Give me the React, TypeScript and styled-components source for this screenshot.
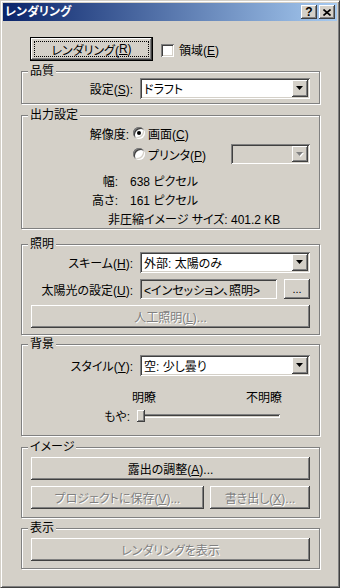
import React from 'react';
import styled, { createGlobalStyle, css } from 'styled-components';

const GlobalStyle = createGlobalStyle`
  html, body {
    margin: 0;
    padding: 0;
    background: #d4d0c8;
  }
  body {
    font-family: "Liberation Sans", "Noto Sans CJK JP", sans-serif;
    font-size: 12px;
    font-feature-settings: "palt" 1;
    color: #000;
  }
  * {
    box-sizing: border-box;
  }
`;

const raised = css`
  box-shadow: inset -1px -1px #404040, inset 1px 1px #fff, inset -2px -2px #808080;
`;

const sunken = css`
  box-shadow: inset 1px 1px #808080, inset -1px -1px #fff, inset 2px 2px #404040,
    inset -2px -2px #d4d0c8;
`;

const Window = styled.div`
  width: 340px;
  height: 588px;
  background: #d4d0c8;
  border: 1px solid;
  border-color: #d4d0c8 #404040 #404040 #d4d0c8;
  box-shadow: inset 1px 1px #fff, inset -1px -1px #808080;
  padding: 2px;
  display: flex;
  flex-direction: column;
`;

const TitleBar = styled.div`
  height: 18px;
  display: flex;
  align-items: center;
  padding: 0 2px 0 2px;
  background: linear-gradient(to right, #0a246a, #a6caf0);
`;

const TitleText = styled.span`
  flex: 1;
  color: #fff;
  font-weight: bold;
  font-size: 12px;
  line-height: 18px;
`;

const TitleButton = styled.span`
  width: 16px;
  height: 14px;
  margin-left: 2px;
  background: #d4d0c8;
  ${raised};
  display: flex;
  align-items: center;
  justify-content: center;
  font-weight: bold;
  font-size: 12px;
  line-height: 14px;
`;

const Body = styled.div`
  flex: 1;
  padding: 16px 17px 0 18px;
  display: flex;
  flex-direction: column;
`;

const TopRow = styled.div`
  height: 24px;
  padding-left: 9px;
  display: flex;
  align-items: center;
`;

const DefaultButton = styled.button`
  width: 123px;
  height: 24px;
  padding: 3px;
  border: 1px solid #000;
  background: #d4d0c8;
  ${raised};
  font: inherit;
  color: #000;
  display: flex;
`;

const FocusRing = styled.span`
  flex: 1;
  border: 1px dotted #000;
  display: flex;
  align-items: center;
  justify-content: center;
`;

const CheckBox = styled.span`
  width: 13px;
  height: 13px;
  margin: 2px 5px 0 8px;
  background: #fff;
  ${sunken};
`;

const U = styled.span`
  text-decoration: underline;
`;

const Group = styled.div<{ $h: number; $mt: number }>`
  height: ${(p) => p.$h}px;
  margin-top: ${(p) => p.$mt}px;
  border: 1px solid #808080;
  box-shadow: inset 1px 1px #fff, 1px 1px #fff;
  padding: 0 9px;
  display: flex;
  flex-direction: column;
`;

const Legend = styled.div`
  align-self: flex-start;
  height: 14px;
  line-height: 14px;
  margin: -8px 0 0 -3px;
  padding: 0 2px;
  background: #d4d0c8;
`;

const FieldRow = styled.div<{ $mt: number }>`
  margin-top: ${(p) => p.$mt}px;
  display: grid;
  grid-template-columns: 1fr 170px;
  column-gap: 7px;
  align-items: center;
`;

const FieldLabel = styled.span`
  justify-self: end;
  white-space: nowrap;
`;

const Combo = styled.div<{ $disabled?: boolean; $w?: number; $h?: number }>`
  width: ${(p) => (p.$w ? `${p.$w}px` : 'auto')};
  height: ${(p) => p.$h ?? 21}px;
  padding: 2px;
  display: flex;
  background: ${(p) => (p.$disabled ? '#d4d0c8' : '#fff')};
  ${sunken};
`;

const ComboText = styled.span`
  flex: 1;
  padding-left: 2px;
  display: flex;
  align-items: center;
  white-space: nowrap;
  overflow: hidden;
`;

const ArrowButton = styled.span`
  width: 16px;
  background: #d4d0c8;
  ${raised};
  display: flex;
  align-items: center;
  justify-content: center;
`;

const Split = styled.div`
  display: flex;
  gap: 7px;
`;

const SmallButton = styled.span`
  width: 26px;
  height: 20px;
  background: #d4d0c8;
  ${raised};
  display: flex;
  align-items: center;
  justify-content: center;
  font-size: 11px;
  line-height: 14px;
`;

const ResRow = styled.div<{ $mt: number }>`
  height: 20px;
  margin-top: ${(p) => p.$mt}px;
  display: flex;
  align-items: center;
`;

const ResLabel = styled.span`
  width: 98px;
  margin-right: 4px;
  text-align: right;
  white-space: nowrap;
`;

const RadioOption = styled.span`
  flex: 1;
  display: flex;
  align-items: center;
  gap: 3px;
`;

const Radio = styled.span<{ $checked?: boolean }>`
  width: 12px;
  height: 12px;
  border-radius: 50%;
  background: #fff;
  box-shadow: inset 1px 1px #808080, inset -1px -1px #fff, inset 2px 2px #404040,
    inset -2px -2px #d4d0c8;
  display: flex;
  align-items: center;
  justify-content: center;

  &::after {
    content: '';
    display: ${(p) => (p.$checked ? 'block' : 'none')};
    width: 4px;
    height: 4px;
    border-radius: 50%;
    background: #000;
  }
`;

const InfoRow = styled.div<{ $mt?: number; $indent?: number }>`
  height: 19px;
  margin-top: ${(p) => p.$mt ?? 0}px;
  padding-left: ${(p) => p.$indent ?? 0}px;
  display: flex;
  align-items: center;
  white-space: nowrap;
`;

const InfoLabel = styled.span`
  width: 87px;
  margin-right: 12px;
  text-align: right;
`;

const Button = styled.button<{ $mt?: number; $w?: number }>`
  height: 23px;
  margin-top: ${(p) => p.$mt ?? 0}px;
  width: ${(p) => (p.$w ? `${p.$w}px` : 'auto')};
  flex: ${(p) => (p.$w ? 'none' : '1')};
  padding: 0;
  border: none;
  background: #d4d0c8;
  ${raised};
  font: inherit;
  color: #000;
  white-space: nowrap;

  &:disabled {
    color: #808080;
    text-shadow: 1px 1px #fff;
  }
`;

const ButtonRow = styled.div<{ $mt: number }>`
  margin-top: ${(p) => p.$mt}px;
  display: flex;
  gap: 6px;
`;

const HazeLabels = styled.div<{ $mt: number }>`
  height: 14px;
  margin-top: ${(p) => p.$mt}px;
  padding-left: 101px;
  display: flex;
  align-items: center;
`;

const HazeEnds = styled.span`
  width: 150px;
  display: flex;
  justify-content: space-between;
`;

const SliderRow = styled.div<{ $mt: number }>`
  height: 14px;
  margin-top: ${(p) => p.$mt}px;
  display: grid;
  grid-template-columns: 99px 143px;
  column-gap: 7px;
  align-items: center;
`;

const Slider = styled.div`
  position: relative;
  height: 14px;
  display: flex;
  align-items: center;
`;

const Track = styled.div`
  flex: 1;
  height: 4px;
  ${sunken};
  background: #d4d0c8;
`;

const Thumb = styled.span`
  position: absolute;
  left: 0;
  top: 1px;
  width: 8px;
  height: 12px;
  background: #d4d0c8;
  ${raised};
`;

function DownArrow({ disabled }: { disabled?: boolean }) {
  return (
    <svg width="8" height="5" viewBox="0 0 8 5">
      {disabled && <polygon points="1,1 8,1 4.5,5" fill="#fff" />}
      <polygon points="0,0 7,0 3.5,4" fill={disabled ? '#808080' : '#000'} />
    </svg>
  );
}

function CloseGlyph() {
  return (
    <svg width="8" height="7" viewBox="0 0 8 7">
      <path d="M0.5 0.5 L7.5 6.5 M7.5 0.5 L0.5 6.5" stroke="#000" strokeWidth="1.6" />
    </svg>
  );
}

export default function App() {
  return (
    <>
      <GlobalStyle />
      <Window>
        <TitleBar>
          <TitleText>レンダリング</TitleText>
          <TitleButton>?</TitleButton>
          <TitleButton>
            <CloseGlyph />
          </TitleButton>
        </TitleBar>
        <Body>
          <TopRow>
            <DefaultButton>
              <FocusRing>
                レンダリング(<U>R</U>)
              </FocusRing>
            </DefaultButton>
            <CheckBox />
            <span>
              領域(<U>E</U>)
            </span>
          </TopRow>

          <Group $h={33} $mt={10}>
            <Legend>品質</Legend>
            <FieldRow $mt={0}>
              <FieldLabel>
                設定(<U>S</U>):
              </FieldLabel>
              <Combo>
                <ComboText>ドラフト</ComboText>
                <ArrowButton>
                  <DownArrow />
                </ArrowButton>
              </Combo>
            </FieldRow>
          </Group>

          <Group $h={114} $mt={11}>
            <Legend>出力設定</Legend>
            <ResRow $mt={1}>
              <ResLabel>解像度:</ResLabel>
              <RadioOption>
                <Radio $checked />
                <span>
                  画面(<U>C</U>)
                </span>
              </RadioOption>
            </ResRow>
            <ResRow $mt={1}>
              <ResLabel />
              <RadioOption>
                <Radio />
                <span>
                  プリンタ(<U>P</U>)
                </span>
              </RadioOption>
              <Combo $disabled $w={79} $h={20}>
                <ComboText />
                <ArrowButton>
                  <DownArrow disabled />
                </ArrowButton>
              </Combo>
            </ResRow>
            <InfoRow $mt={7}>
              <InfoLabel>幅:</InfoLabel>
              <span>638 ピクセル</span>
            </InfoRow>
            <InfoRow>
              <InfoLabel>高さ:</InfoLabel>
              <span>161 ピクセル</span>
            </InfoRow>
            <InfoRow $indent={77}>非圧縮イメージ サイズ: 401.2 KB</InfoRow>
          </Group>

          <Group $h={91} $mt={15}>
            <Legend>照明</Legend>
            <FieldRow $mt={1}>
              <FieldLabel>
                スキーム(<U>H</U>):
              </FieldLabel>
              <Combo>
                <ComboText>外部: 太陽のみ</ComboText>
                <ArrowButton>
                  <DownArrow />
                </ArrowButton>
              </Combo>
            </FieldRow>
            <FieldRow $mt={6}>
              <FieldLabel>
                太陽光の設定(<U>U</U>):
              </FieldLabel>
              <Split>
                <Combo $disabled $h={20} style={{ flex: 1 }}>
                  <ComboText>&lt;インセッション、照明&gt;</ComboText>
                </Combo>
                <SmallButton>...</SmallButton>
              </Split>
            </FieldRow>
            <ButtonRow $mt={6}>
              <Button disabled>
                人工照明(<U>L</U>)...
              </Button>
            </ButtonRow>
          </Group>

          <Group $h={92} $mt={9}>
            <Legend>背景</Legend>
            <FieldRow $mt={4}>
              <FieldLabel>
                スタイル(<U>Y</U>):
              </FieldLabel>
              <Combo>
                <ComboText>空: 少し曇り</ComboText>
                <ArrowButton>
                  <DownArrow />
                </ArrowButton>
              </Combo>
            </FieldRow>
            <HazeLabels $mt={13}>
              <HazeEnds>
                <span>明瞭</span>
                <span>不明瞭</span>
              </HazeEnds>
            </HazeLabels>
            <SliderRow $mt={4}>
              <FieldLabel>もや:</FieldLabel>
              <Slider>
                <Track />
                <Thumb />
              </Slider>
            </SliderRow>
          </Group>

          <Group $h={71} $mt={11}>
            <Legend>イメージ</Legend>
            <ButtonRow $mt={3}>
              <Button>
                露出の調整(<U>A</U>)...
              </Button>
            </ButtonRow>
            <ButtonRow $mt={6}>
              <Button disabled $w={173}>
                プロジェクトに保存(<U>V</U>)...
              </Button>
              <Button disabled>
                書き出し(<U>X</U>)...
              </Button>
            </ButtonRow>
          </Group>

          <Group $h={41} $mt={10}>
            <Legend>表示</Legend>
            <ButtonRow $mt={3}>
              <Button disabled>レンダリングを表示</Button>
            </ButtonRow>
          </Group>
        </Body>
      </Window>
    </>
  );
}
